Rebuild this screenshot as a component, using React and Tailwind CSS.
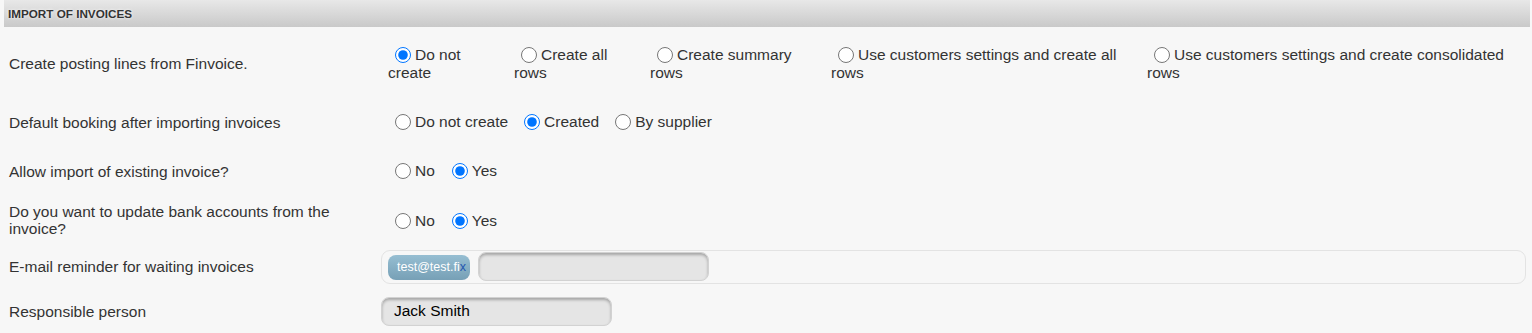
import { useState } from "react";

const font = { fontFamily: '"Liberation Sans", Arial, sans-serif' };

function Radio({ name, label, checked, onChange }) {
  return (
    <label className="cursor-pointer">
      <input
        type="radio"
        name={name}
        checked={checked}
        onChange={onChange}
        className="w-4 h-4 ml-[7px] mr-[4px] align-[-3px] m-0 accent-[#0075ff]"
      />
      {label}
    </label>
  );
}

function Row({ label, height, children }) {
  return (
    <div className={"flex items-center " + height}>
      <div className="w-[381px] shrink-0 pl-[9px] pr-[24px] leading-[17px]">{label}</div>
      <div className="flex-1 min-w-0">{children}</div>
    </div>
  );
}

const postingOpts = [
  { label: "Do not create", w: "w-[133px] pl-[7px]" },
  { label: "Create all rows", w: "w-[136px]" },
  { label: "Create summary rows", w: "w-[181px]" },
  { label: "Use customers settings and create all rows", w: "w-[316px]" },
  { label: "Use customers settings and create consolidated rows", w: "flex-1" },
];

export default function App() {
  const [posting, setPosting] = useState(0);
  const [booking, setBooking] = useState("Created");
  const [allowImport, setAllowImport] = useState("Yes");
  const [updateBank, setUpdateBank] = useState("Yes");

  return (
    <div className="min-h-[333px] bg-[#f7f7f7] text-[15.5px] text-[#333]" style={font}>
      <div className="ml-[4px] mr-[2px] h-[27px] flex items-center pl-[4px] bg-gradient-to-b from-[#e8e8e8] to-[#c9c9c9]">
        <span className="text-[11.7px] font-bold text-[#333] [text-shadow:0_0_3px_#fff]">IMPORT OF INVOICES</span>
      </div>

      <Row label="Create posting lines from Finvoice." height="h-[73px]">
        <div className="flex leading-[18px]">
          {postingOpts.map((o, i) => (
            <div key={o.label} className={o.w + " pr-[16px]"}>
              <Radio name="posting" label={o.label} checked={posting === i} onChange={() => setPosting(i)} />
            </div>
          ))}
        </div>
      </Row>

      <Row label="Default booking after importing invoices" height="h-[44px]">
        <div className="flex gap-[9px] pl-[7px] leading-[18px]">
          {["Do not create", "Created", "By supplier"].map((o) => (
            <Radio key={o} name="booking" label={o} checked={booking === o} onChange={() => setBooking(o)} />
          ))}
        </div>
      </Row>

      <Row label="Allow import of existing invoice?" height="h-[54px]">
        <div className="flex gap-[10px] pl-[7px] leading-[18px]">
          {["No", "Yes"].map((o) => (
            <Radio key={o} name="allow" label={o} checked={allowImport === o} onChange={() => setAllowImport(o)} />
          ))}
        </div>
      </Row>

      <Row label="Do you want to update bank accounts from the invoice?" height="h-[43px]">
        <div className="flex gap-[10px] pl-[7px] pt-[2px] leading-[18px]">
          {["No", "Yes"].map((o) => (
            <Radio key={o} name="bank" label={o} checked={updateBank === o} onChange={() => setUpdateBank(o)} />
          ))}
        </div>
      </Row>

      <Row label="E-mail reminder for waiting invoices" height="h-[51px]">
        <div className="mr-[6px] h-[34px] flex items-center gap-[8px] pl-[6px] border border-[#e3e3e3] rounded-[9px]">
          <span className="h-[25px] w-[82px] mt-[2px] flex items-center pl-[9px] rounded-[8px] bg-gradient-to-b from-[#96bed2] to-[#77a0b6] text-[12.5px] text-white">
            test@test.fi<span className="text-[#2456b0]">x</span>
          </span>
          <input
            type="text"
            className="h-[29px] w-[231px] rounded-[8px] border border-[#d2d2d2] bg-[#e5e5e5] shadow-[inset_0_2px_3px_rgba(0,0,0,0.28)] outline-none px-[12px]"
          />
        </div>
      </Row>

      <Row label="Responsible person" height="h-[38px]">
        <input
          type="text"
          defaultValue="Jack Smith"
          className="h-[29px] w-[231px] rounded-[8px] border border-[#d2d2d2] bg-[#e5e5e5] shadow-[inset_0_2px_3px_rgba(0,0,0,0.28)] outline-none px-[12px] text-[15.5px] text-black"
        />
      </Row>
    </div>
  );
}
